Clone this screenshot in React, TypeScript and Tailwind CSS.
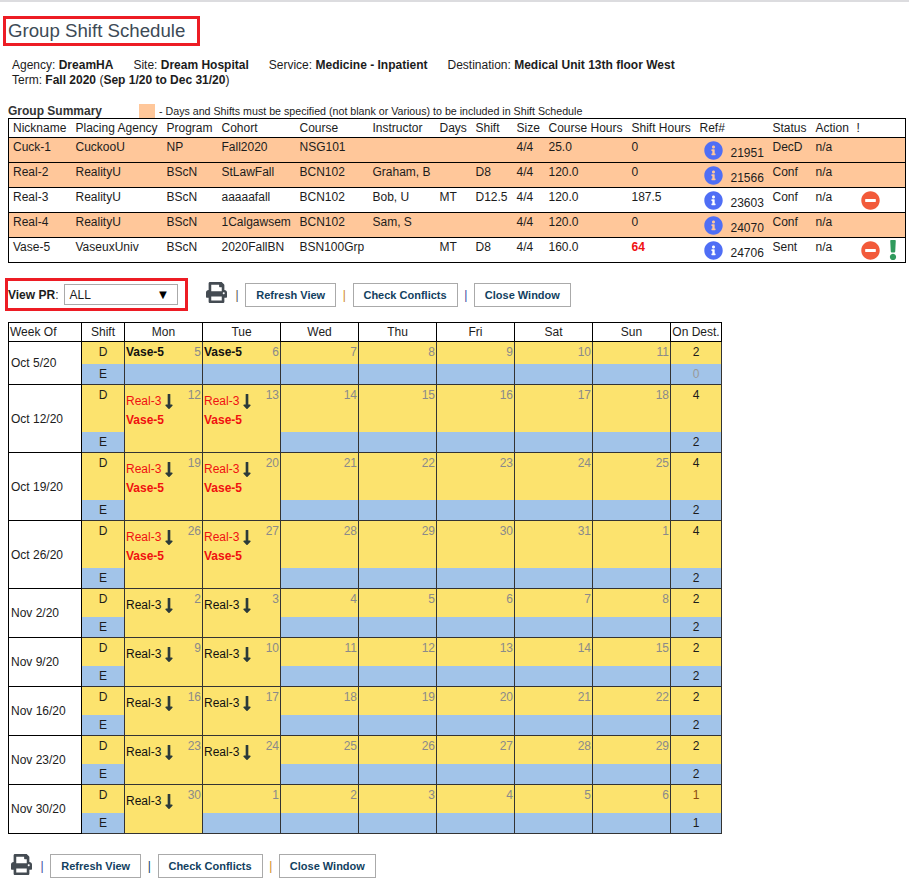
import { FaInfoCircle, FaMinusCircle, FaExclamation, FaLongArrowAltDown, FaPrint } from "react-icons/fa";

const SUMMARY_COLS = [63, 91, 55, 78, 73, 67, 36, 41, 32, 83, 68, 73, 43, 41, 53];
const SUMMARY_HEAD = ["Nickname", "Placing Agency", "Program", "Cohort", "Course", "Instructor", "Days", "Shift", "Size", "Course Hours", "Shift Hours", "Ref#", "Status", "Action", "!"];

type Summary = {
  cells: string[];
  ref: string;
  status: string;
  orange?: boolean;
  minus?: boolean;
  warn?: boolean;
  redHours?: boolean;
};

const SUMMARY: Summary[] = [
  { cells: ["Cuck-1", "CuckooU", "NP", "Fall2020", "NSG101", "", "", "", "4/4", "25.0", "0"], ref: "21951", status: "DecD", orange: true },
  { cells: ["Real-2", "RealityU", "BScN", "StLawFall", "BCN102", "Graham, B", "", "D8", "4/4", "120.0", "0"], ref: "21566", status: "Conf", orange: true },
  { cells: ["Real-3", "RealityU", "BScN", "aaaaafall", "BCN102", "Bob, U", "MT", "D12.5", "4/4", "120.0", "187.5"], ref: "23603", status: "Conf", minus: true },
  { cells: ["Real-4", "RealityU", "BScN", "1Calgawsem", "BCN102", "Sam, S", "", "", "4/4", "120.0", "0"], ref: "24070", status: "Conf", orange: true },
  { cells: ["Vase-5", "VaseuxUniv", "BScN", "2020FallBN", "BSN100Grp", "", "MT", "D8", "4/4", "160.0", "64"], ref: "24706", status: "Sent", minus: true, warn: true, redHours: true },
];

type Week = {
  label: string;
  dates: number[];
  kind: "vase" | "red" | "real";
  spans: number;
  d: string;
  e: string;
  muted?: boolean;
  last?: boolean;
};

const WEEKS: Week[] = [
  { label: "Oct 5/20", dates: [5, 6, 7, 8, 9, 10, 11], kind: "vase", spans: 0, d: "2", e: "0", muted: true },
  { label: "Oct 12/20", dates: [12, 13, 14, 15, 16, 17, 18], kind: "red", spans: 2, d: "4", e: "2" },
  { label: "Oct 19/20", dates: [19, 20, 21, 22, 23, 24, 25], kind: "red", spans: 2, d: "4", e: "2" },
  { label: "Oct 26/20", dates: [26, 27, 28, 29, 30, 31, 1], kind: "red", spans: 2, d: "4", e: "2" },
  { label: "Nov 2/20", dates: [2, 3, 4, 5, 6, 7, 8], kind: "real", spans: 2, d: "2", e: "2" },
  { label: "Nov 9/20", dates: [9, 10, 11, 12, 13, 14, 15], kind: "real", spans: 2, d: "2", e: "2" },
  { label: "Nov 16/20", dates: [16, 17, 18, 19, 20, 21, 22], kind: "real", spans: 2, d: "2", e: "2" },
  { label: "Nov 23/20", dates: [23, 24, 25, 26, 27, 28, 29], kind: "real", spans: 2, d: "2", e: "2" },
  { label: "Nov 30/20", dates: [30, 1, 2, 3, 4, 5, 6], kind: "real", spans: 1, d: "1", e: "1", last: true },
];

const DAYS = ["Mon", "Tue", "Wed", "Thu", "Fri", "Sat", "Sun"];

function Toolbar({ bars }: { bars: string[] }) {
  return (
    <div className="flex items-center text-[11px] font-bold text-[#123f5f]">
      <FaPrint className="mr-[8.5px] h-[21px] w-[21px] -translate-y-[2px] text-[#444b52]" />
      <span className={`mr-[6.6px] font-normal text-[12px] ${bars[0]}`}>|</span>
      <button className="mr-[6.6px] h-[24px] w-[91px] border border-[#aaaaaa] bg-white">Refresh View</button>
      <span className={`mr-[6.6px] font-normal text-[12px] ${bars[1]}`}>|</span>
      <button className="mr-[6.6px] h-[24px] w-[105px] border border-[#aaaaaa] bg-white">Check Conflicts</button>
      <span className={`mr-[6.6px] font-normal text-[12px] ${bars[2]}`}>|</span>
      <button className="h-[24px] w-[97px] border border-[#aaaaaa] bg-white">Close Window</button>
    </div>
  );
}

function DayCell({ week, index, date }: { week: Week; index: number; date: number }) {
  const booked = index < week.spans;
  const red = week.kind === "red";
  return (
    <td
      rowSpan={booked ? 2 : 1}
      className={`border-x border-t border-[#333333] bg-[#fce36e] p-0 align-top ${booked ? "border-b" : ""}`}
    >
      <div className="flex justify-between px-[1px]">
        {booked ? (
          <div className={`pt-[7px] ${red ? "text-[#f01010]" : "text-[#111111]"}`}>
            <div className="flex h-[18px] items-center">
              Real-3
              <FaLongArrowAltDown className="ml-[2px] h-[17px] w-[12px] text-[#2b3a3a]" />
            </div>
            {red && <div className="mt-[1px] font-bold leading-[18px]">Vase-5</div>}
          </div>
        ) : week.kind === "vase" && index < 2 ? (
          <div className="pt-[3px] font-bold text-[#111111]">Vase-5</div>
        ) : (
          <div />
        )}
        <span className="pt-[3px] text-[#8a8a8a]">{date}</span>
      </div>
    </td>
  );
}

export default function App() {
  return (
    <div className="min-h-[887px] bg-white text-[12px] leading-[14px] text-[#1c1c1c] [font-family:'Liberation_Sans',Arial,sans-serif]">
      <div className="h-[2px] bg-[#dcdcdf]" />

      <div className="ml-[3px] mt-[14px] flex h-[30px] w-[197px] items-center border-[3px] border-[#ed1c24] pl-[2px] text-[18.67px] text-[#3d4a56]">
        Group Shift Schedule
      </div>

      <div className="ml-[12px] mt-[12px] leading-[15px]">
        <div className="flex gap-[20px]">
          <span>Agency: <b>DreamHA</b></span>
          <span>Site: <b>Dream Hospital</b></span>
          <span>Service: <b>Medicine - Inpatient</b></span>
          <span>Destination: <b>Medical Unit 13th floor West</b></span>
        </div>
        <div>Term: <b>Fall 2020</b> (<b>Sep 1/20 to Dec 31/20</b>)</div>
      </div>

      <div className="ml-[8px] mt-[16px] flex h-[14px] items-end">
        <b className="w-[131px] text-[#333333]">Group Summary</b>
        <span className="h-[14px] w-[16px] bg-[#ffc79a]" />
        <span className="ml-[4px] text-[10.67px]">- Days and Shifts must be specified (not blank or Various) to be included in Shift Schedule</span>
      </div>

      <table className="ml-[8px] w-[897px] table-fixed border-collapse border border-black">
        <colgroup>
          {SUMMARY_COLS.map((w, i) => (
            <col key={i} style={{ width: w }} />
          ))}
        </colgroup>
        <thead>
          <tr className="h-[19px]">
            {SUMMARY_HEAD.map((h) => (
              <th key={h} className="overflow-hidden whitespace-nowrap p-0 pl-[4px] text-left font-normal">{h}</th>
            ))}
          </tr>
        </thead>
        <tbody>
          {SUMMARY.map((r) => (
            <tr key={r.ref} className={`h-[25px] border-t border-black ${r.orange ? "bg-[#ffc79a]" : "bg-white"}`}>
              {r.cells.map((c, i) => (
                <td
                  key={i}
                  className={`whitespace-nowrap p-0 pl-[4px] pt-[2px] align-top ${i === 10 && r.redHours ? "font-bold text-[#f01010]" : ""}`}
                >
                  {c}
                </td>
              ))}
              <td className="p-0 pl-[8px] align-top">
                <div className="flex items-end">
                  <FaInfoCircle className="mt-[3px] h-[19px] w-[19px] text-[#4f6ef5]" />
                  <span className="ml-[8px]">{r.ref}</span>
                </div>
              </td>
              <td className="p-0 pl-[4px] pt-[2px] align-top">{r.status}</td>
              <td className="p-0 pl-[4px] pt-[2px] align-top">n/a</td>
              <td className="p-0 pl-[8px] align-top">
                <div className="flex items-start">
                  {r.minus && <FaMinusCircle className="mt-[3px] h-[19px] w-[19px] text-[#f25a3a]" />}
                  {r.warn && <FaExclamation className="ml-[9px] mt-[2px] h-[20px] w-[8px] text-[#2f9a5c]" />}
                </div>
              </td>
            </tr>
          ))}
        </tbody>
      </table>

      <div className="ml-[5px] mt-[15px] flex items-center">
        <div className="flex h-[33px] w-[183px] items-center border-[3px] border-[#ed1c24]">
          <span><b>View PR</b>:</span>
          <div className="ml-[6px] flex h-[21px] w-[114px] items-center justify-between border border-[#aaaaaa] pl-[4px] pr-[8px]">
            ALL
            <span className="text-[13px] text-black">▼</span>
          </div>
        </div>
        <div className="ml-[18px]">
          <Toolbar bars={["text-[#555555]", "text-[#d08a1e]", "text-[#3b4aa0]"]} />
        </div>
      </div>

      <table className="ml-[8px] mt-[11px] w-[714px] table-fixed border-collapse border border-black">
        <colgroup>
          <col className="w-[73px]" />
          <col className="w-[43px]" />
          {DAYS.map((d) => (
            <col key={d} className="w-[78px]" />
          ))}
          <col className="w-[51px]" />
        </colgroup>
        <thead>
          <tr className="h-[19px]">
            <th className="border border-black p-0 pl-[1px] text-left font-normal">Week Of</th>
            <th className="border border-black p-0 font-normal">Shift</th>
            {DAYS.map((d) => (
              <th key={d} className="border border-black p-0 font-normal">{d}</th>
            ))}
            <th className="whitespace-nowrap border border-black p-0 font-normal">On Dest.</th>
          </tr>
        </thead>
        <tbody>
          {WEEKS.map((w) => {
            const dH = w.kind === "vase" ? "h-[22px]" : w.kind === "red" ? "h-[47px]" : "h-[28px]";
            return [
              <tr key={w.label} className={dH}>
                <td rowSpan={2} className="border border-black bg-white p-0 pl-[2px] align-middle">{w.label}</td>
                <td className="border-x border-t border-[#333333] bg-[#fce36e] p-0 pt-[3px] text-center align-top">D</td>
                {w.dates.map((date, i) => (
                  <DayCell key={i} week={w} index={i} date={date} />
                ))}
                <td className={`border-x border-t border-[#333333] bg-[#fce36e] p-0 pt-[3px] text-center align-top ${w.last ? "text-[#8a4b10]" : ""}`}>{w.d}</td>
              </tr>,
              <tr key={`${w.label}-e`} className="h-[21px]">
                <td className="border-x border-b border-[#333333] bg-[#a2c4e9] p-0 text-center">E</td>
                {w.dates.map((_, i) =>
                  i < w.spans ? null : <td key={i} className="border-x border-b border-[#333333] bg-[#a2c4e9] p-0" />
                )}
                <td className={`border-x border-b border-[#333333] bg-[#a2c4e9] p-0 text-center ${w.muted ? "text-[#999999]" : ""}`}>{w.e}</td>
              </tr>,
            ];
          })}
        </tbody>
      </table>

      <div className="ml-[11px] mt-[20px]">
        <Toolbar bars={["text-[#3b4aa0]", "text-[#123f5f]", "text-[#d08a1e]"]} />
      </div>
    </div>
  );
}
